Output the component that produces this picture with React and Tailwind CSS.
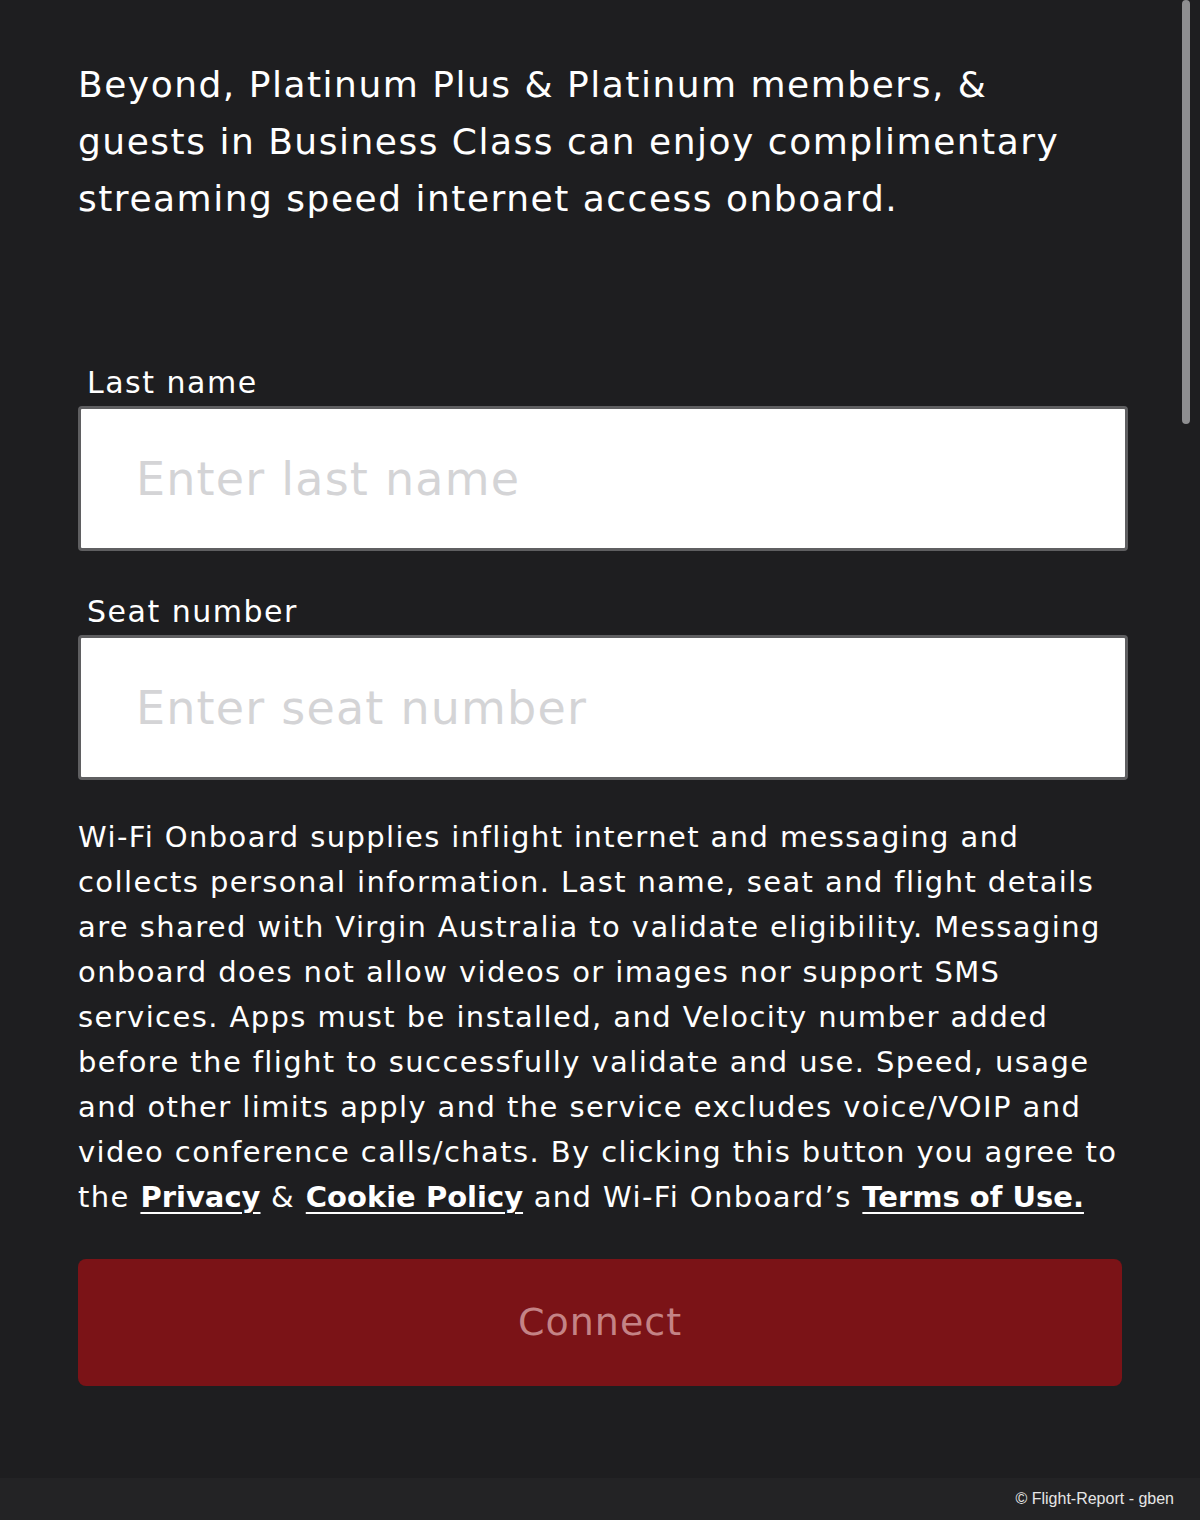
import React from "react";

const intro = [
  "Beyond, Platinum Plus & Platinum members, &",
  "guests in Business Class can enjoy complimentary",
  "streaming speed internet access onboard.",
];

const Field = ({ label, placeholder, className }) => (
  <div className={className}>
    <label className="block pl-[9px] text-[30px] leading-[40px] tracking-[1.5px] text-white">
      {label}
    </label>
    <input
      type="text"
      placeholder={placeholder}
      className="mt-[3px] block h-[145px] w-[1050px] rounded-[4px] border-[3px] border-[#5f5f61] bg-white pl-[55px] text-[46px] tracking-[1.2px] text-gray-800 outline-none placeholder:text-[#d4d4d6]"
    />
  </div>
);

const Link = ({ children }) => (
  <a
    href="#"
    className="font-bold tracking-normal underline decoration-2 underline-offset-[5px]"
  >
    {children}
  </a>
);

export default function App() {
  return (
    <div
      className="relative flex min-h-screen w-[1200px] flex-col bg-[#1e1e20] text-white"
      style={{ fontFamily: '"DejaVu Sans", "Open Sans", sans-serif' }}
    >
      <div className="flex-1 pl-[78px] pt-[56px]">
        <div className="text-[36px] leading-[57px] tracking-[1.5px] whitespace-nowrap">
          {intro.map((line) => (
            <div key={line}>{line}</div>
          ))}
        </div>

        <Field label="Last name" placeholder="Enter last name" className="mt-[136px]" />
        <Field label="Seat number" placeholder="Enter seat number" className="mt-[41px]" />

        <p className="mt-[35px] text-[29px] leading-[45px] tracking-[1.4px] whitespace-nowrap">
          Wi-Fi Onboard supplies inflight internet and messaging and
          <br />
          collects personal information. Last name, seat and flight details
          <br />
          are shared with Virgin Australia to validate eligibility. Messaging
          <br />
          onboard does not allow videos or images nor support SMS
          <br />
          services. Apps must be installed, and Velocity number added
          <br />
          before the flight to successfully validate and use. Speed, usage
          <br />
          and other limits apply and the service excludes voice/VOIP and
          <br />
          video conference calls/chats. By clicking this button you agree to
          <br />
          the <Link>Privacy</Link> &amp; <Link>Cookie Policy</Link> and Wi-Fi Onboard’s{" "}
          <Link>Terms of Use.</Link>
        </p>

        <button className="mt-[39px] mb-[92px] flex h-[127px] w-[1044px] items-center justify-center rounded-[8px] bg-[#7b1317] text-[38px] tracking-[1px] text-[#c48386]">
          Connect
        </button>
      </div>

      <div className="flex h-[42px] items-center justify-end bg-[#232325] pr-[26px]">
        <span
          className="text-[16px] text-[#e6e6e6]"
          style={{ fontFamily: '"Liberation Sans", Arial, sans-serif' }}
        >
          © Flight-Report - gben
        </span>
      </div>

      <div className="absolute right-[10px] top-0 h-[424px] w-[8px] rounded-full bg-[#8e8e90]" />
    </div>
  );
}
